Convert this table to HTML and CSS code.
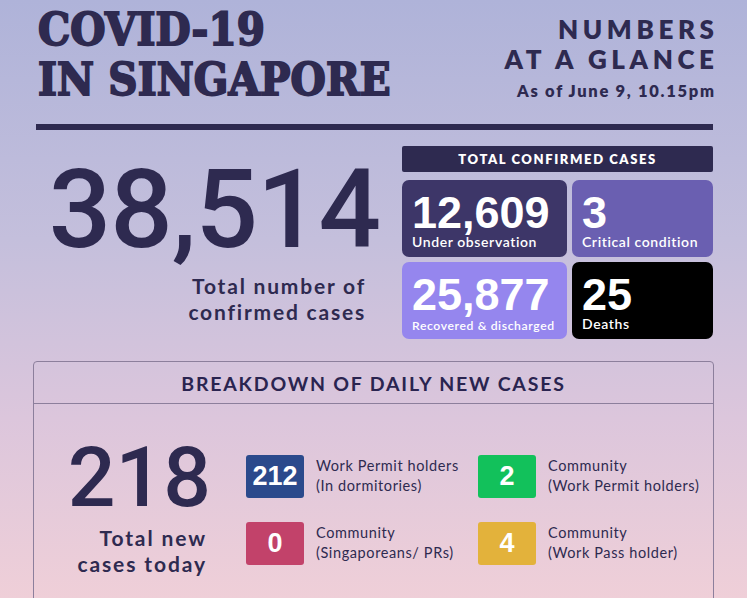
FILE: index.html
```html
<!DOCTYPE html>
<html lang="en">
<head>
<meta charset="utf-8">
<title>COVID-19 in Singapore</title>
<link rel="stylesheet" href="styles.css">
</head>
<body>
<div class="page">
  <header class="header">
    <h1 class="title">COVID-19<br>IN SINGAPORE</h1>
    <div class="glance">
      <div class="glance-title">NUMBERS<br>AT A GLANCE</div>
      <div class="glance-date">As of June 9, 10.15pm</div>
    </div>
  </header>
  <div class="rule"></div>

  <section class="summary">
    <div class="total">
      <div class="total-num">38,514</div>
      <div class="total-label">Total number of<br>confirmed cases</div>
    </div>
    <div class="panel">
      <div class="panel-head">TOTAL CONFIRMED CASES</div>
      <div class="cards">
        <div class="card card-obs"><div class="card-num">12,609</div><div class="card-label">Under observation</div></div>
        <div class="card card-crit"><div class="card-num">3</div><div class="card-label">Critical condition</div></div>
        <div class="card card-rec"><div class="card-num">25,877</div><div class="card-label small">Recovered &amp; discharged</div></div>
        <div class="card card-dead"><div class="card-num">25</div><div class="card-label">Deaths</div></div>
      </div>
    </div>
  </section>

  <section class="breakdown">
    <div class="breakdown-head">BREAKDOWN OF DAILY NEW CASES</div>
    <div class="breakdown-body">
      <div class="today">
        <div class="today-num">218</div>
        <div class="today-label">Total new<br>cases today</div>
      </div>
      <div class="types">
        <div class="type"><span class="badge b-navy">212</span><span class="type-label">Work Permit holders<br>(In dormitories)</span></div>
        <div class="type"><span class="badge b-green">2</span><span class="type-label">Community<br>(Work Permit holders)</span></div>
        <div class="type"><span class="badge b-red">0</span><span class="type-label">Community<br>(Singaporeans/ PRs)</span></div>
        <div class="type"><span class="badge b-yellow">4</span><span class="type-label">Community<br>(Work Pass holder)</span></div>
      </div>
    </div>
  </section>
</div>
</body>
</html>
```

FILE: styles.css
```css
* { box-sizing: border-box; }
html, body { margin: 0; padding: 0; }
body {
  width: 747px;
  height: 598px;
  overflow: hidden;
  background: linear-gradient(to bottom, #afb3d9 0%, #c4bfdc 40%, #dcc6dc 70%, #efcfd8 100%);
  color: #2e2a50;
  font-family: "Lato", "Noto Sans", sans-serif;
}
.page { padding: 0 33px; }

.header {
  display: flex;
  justify-content: space-between;
  align-items: flex-start;
  padding: 5px 0 0 5px;
  height: 124px;
}
.title {
  margin: 0;
  font-family: "DejaVu Serif", serif;
  font-weight: 700;
  font-stretch: condensed;
  font-size: 45px;
  line-height: 50px;
  letter-spacing: 0.1px;
  color: #2e2a50;
  -webkit-text-stroke: 1.8px #2e2a50;
}
.glance { text-align: right; padding-top: 9px; }
.glance-title {
  font-weight: 800;
  font-size: 26px;
  line-height: 30px;
  letter-spacing: 4.6px;
  margin-right: -4.6px;
}
.glance-date {
  margin-top: 7px;
  font-weight: 800;
  font-size: 16.5px;
  letter-spacing: 1.7px;
  margin-right: -1.7px;
}
.rule {
  height: 6px;
  margin: 0 1px 0 3px;
  background: #2e2a50;
}

.summary {
  display: flex;
  padding-top: 16px;
  height: 231px;
}
.total {
  width: 347px;
  text-align: right;
  padding-top: 14px;
}
.total-num {
  font-family: "Roboto", sans-serif;
  font-weight: 500;
  font-size: 110px;
  line-height: 100px;
  letter-spacing: -1px;
}
.total-label {
  margin-top: 13px;
  margin-right: 14px;
  font-weight: 700;
  font-size: 21px;
  line-height: 26px;
  letter-spacing: 1.8px;
}
.panel { margin-left: 22px; width: 311px; }
.panel-head {
  height: 26px;
  background: #2e2a50;
  color: #fff;
  font-weight: 800;
  font-size: 13px;
  letter-spacing: 1.6px;
  line-height: 26px;
  text-align: center;
  border-radius: 2px;
}
.cards {
  margin-top: 8px;
  display: grid;
  grid-template-columns: 165px 141px;
  grid-template-rows: 77px 77px;
  gap: 5px;
}
.card {
  border-radius: 7px;
  color: #fff;
  padding: 15px 0 0 10px;
}
.card-num {
  font-family: "Liberation Sans", Arial, sans-serif;
  font-weight: 700;
  font-size: 45px;
  line-height: 36px;
}
.card-label {
  font-size: 14px;
  line-height: 17px;
  font-weight: 600;
  letter-spacing: 0.6px;
  padding-top: 2px;
}
.card-label.small { font-size: 12.2px; letter-spacing: 0.6px; padding-top: 4px; }
.card-obs { background: #3d3668; }
.card-crit { background: #6a5fb1; }
.card-rec { background: #9586ee; }
.card-dead { background: #000; }

.breakdown {
  border: 1px solid #8c7f9c;
  border-radius: 4px;
  height: 260px;
}
.breakdown-head {
  height: 42px;
  border-bottom: 1.5px solid #8c7f9c;
  text-align: center;
  font-weight: 700;
  font-size: 19.5px;
  line-height: 44px;
  letter-spacing: 1.8px;
  color: #2a2450;
}
.breakdown-body {
  display: flex;
  padding-top: 40px;
}
.today {
  width: 177px;
  text-align: right;
  margin-top: -6px;
}
.today-num {
  font-family: "Roboto", sans-serif;
  font-weight: 500;
  font-size: 84px;
  line-height: 80px;
}
.today-label {
  margin-top: 7px;
  margin-right: 4px;
  font-weight: 700;
  font-size: 21px;
  line-height: 26px;
  letter-spacing: 1.9px;
}
.types {
  margin-left: 35px;
  padding-top: 11px;
  display: grid;
  grid-template-columns: 232px auto;
  row-gap: 24px;
  align-content: start;
}
.type { display: flex; align-items: flex-start; }
.badge {
  flex: none;
  width: 58px;
  height: 43px;
  border-radius: 3px;
  color: #fff;
  font-family: "Liberation Sans", Arial, sans-serif;
  font-weight: 700;
  font-size: 27px;
  line-height: 43px;
  text-align: center;
}
.b-navy { background: #2b4a8c; }
.b-green { background: #12c15b; }
.b-red { background: #c2426a; }
.b-yellow { background: #e3b23b; }
.type-label {
  margin-left: 12px;
  font-size: 14.5px;
  line-height: 20px;
  letter-spacing: 0.6px;
  color: #2e2a50;
  padding-top: 1px;
}
```
